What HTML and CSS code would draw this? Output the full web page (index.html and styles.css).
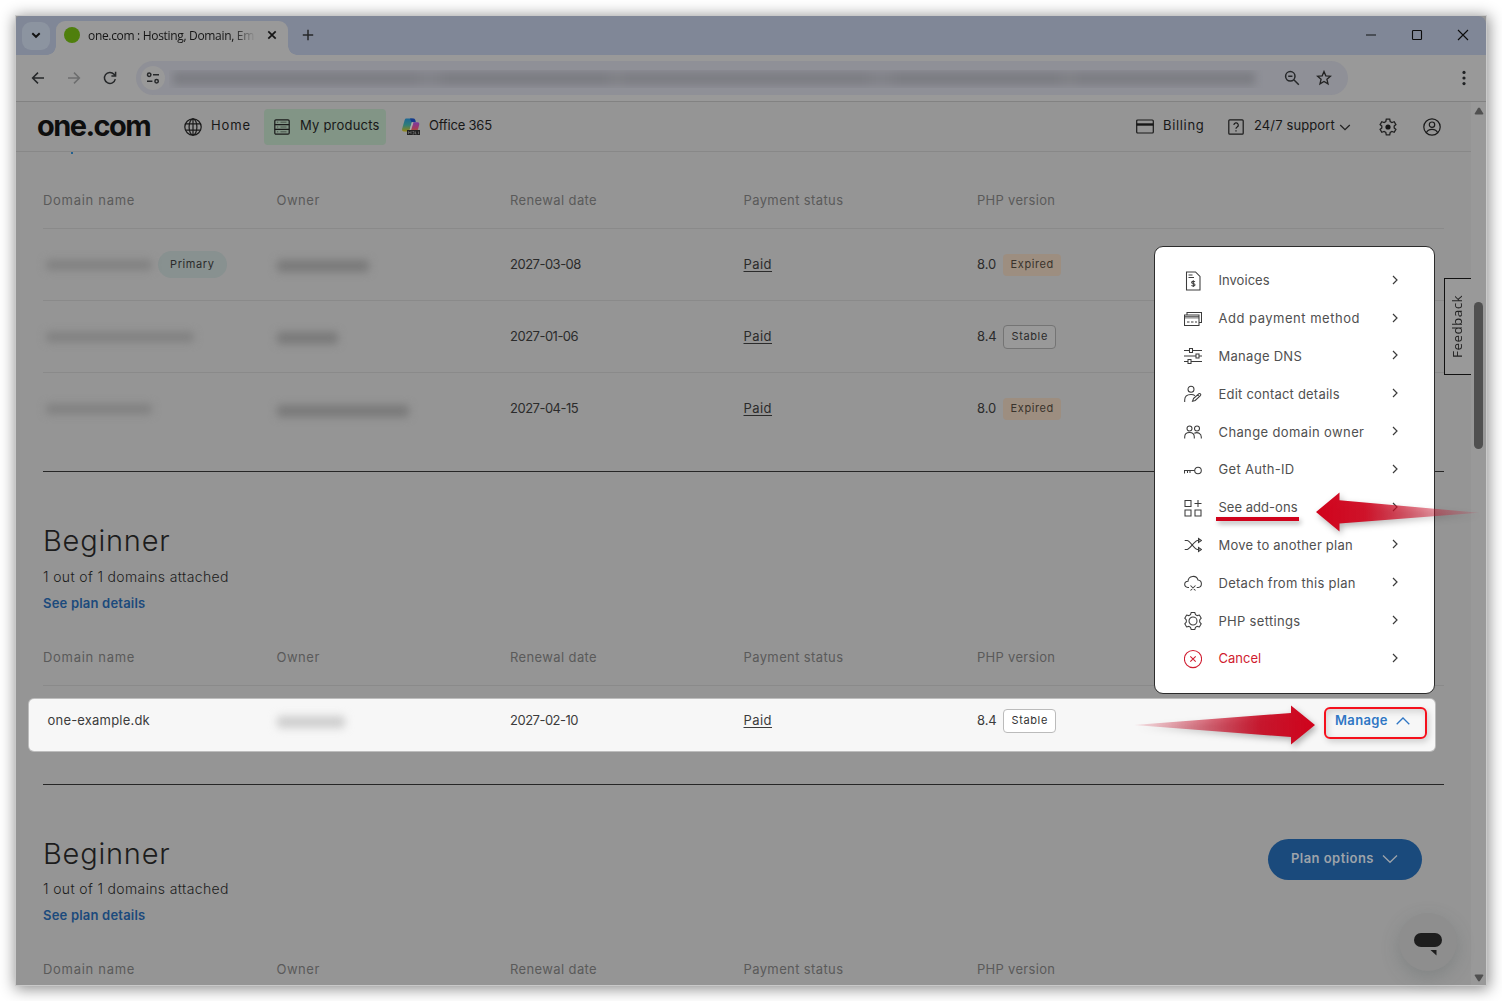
FILE: index.html
```html
<!DOCTYPE html>
<html lang="en">
<head>
<meta charset="utf-8">
<title>one.com</title>
<link rel="stylesheet" href="styles.css">
</head>
<body>
<div class="window">
  <div class="tabstrip">
    <div class="tab-search"><svg width="12" height="12" viewBox="0 0 12 12"><path class="s2" d="M2.3 4.2 6 7.8l3.7-3.6"/></svg></div>
    <div class="tab">
      <i class="favicon"></i>
      <span class="tab-title">one.com : Hosting, Domain, Em</span>
      <svg class="tab-x" width="10" height="10" viewBox="0 0 10 10"><path class="s17" d="M1.3 1.3l7.4 7.4M8.7 1.3 1.3 8.7"/></svg>
    </div>
    <svg class="tab-plus" width="12" height="12" viewBox="0 0 12 12"><path class="s15" d="M6 .8v10.4M.8 6h10.4"/></svg>
    <div class="win-controls">
      <svg width="12" height="12" viewBox="0 0 12 12"><path d="M1 6h10" stroke="#3c4046" stroke-width="1.6"/></svg>
      <svg width="12" height="12" viewBox="0 0 12 12"><rect class="s1k" x="1.5" y="1.5" width="9" height="9" rx=".8"/></svg>
      <svg width="12" height="12" viewBox="0 0 12 12"><path class="s1k" d="M1 1l10 10M11 1 1 11"/></svg>
    </div>
  </div>
  <div class="toolbar">
    <svg width="16" height="16" viewBox="0 0 16 16"><path class="s15" d="M14 8H2.8M8 2.6 2.6 8 8 13.4"/></svg>
    <svg class="fade" width="16" height="16" viewBox="0 0 16 16"><path class="s15" d="M2 8h11.2M8 2.6 13.4 8 8 13.4"/></svg>
    <svg width="16" height="16" viewBox="0 0 16 16"><path class="s15" d="M13.3 9.2A5.5 5.5 0 1 1 12 4.2l1.3 1.4M13.6 1.8v4.2H9.4"/></svg>
    <div class="omnibox">
      <span class="site"><svg width="14" height="12" viewBox="0 0 14 12"><g class="s15"><circle cx="3.2" cy="2.8" r="1.7"/><path d="M7 2.8h6M1 9.2h5.4"/><circle cx="10.6" cy="9.2" r="1.7"/></g></svg></span>
      <span class="url"><i class="url-blur"></i></span>
      <svg width="16" height="16" viewBox="0 0 16 16"><g class="s15"><circle cx="6.3" cy="6.3" r="4.7"/><path d="M9.8 9.8l5 5M4.2 6.3h4.2"/></g></svg>
      <svg class="star" width="16" height="16" viewBox="0 0 16 16"><path class="s13" d="M8 1.500l1.800 4.300 4.700.4-3.600 3 1.100 4.600L8 11.400l-4 2.400 1.100-4.600-3.600-3 4.700-.4z"/></svg>
    </div>
    <svg class="dots" width="4" height="16" viewBox="0 0 4 16"><circle cx="2" cy="2.4" r="1.6"/><circle cx="2" cy="8" r="1.6"/><circle cx="2" cy="13.6" r="1.6"/></svg>
  </div>

  <div class="viewport">
    <div class="page">
      <header class="nav">
        <span class="logo">one.com</span>
        <a class="nav-item home">
          <svg width="18" height="18" viewBox="0 0 18 18"><g class="s12"><circle cx="9" cy="9" r="8.2"/><ellipse cx="9" cy="9" rx="3.9" ry="8.2"/><path d="M1.8 5.8h14.4M1.8 12.2h14.4M9 .8v16.4"/></g></svg>
          <span class="k8">Home</span>
        </a>
        <a class="nav-item active">
          <svg width="16" height="16" viewBox="0 0 16 16"><g class="s12"><rect x=".8" y=".8" width="14.4" height="14.4" rx="1.2"/><path d="M.8 5.600h14.400M.8 10.400h14.400"/><path d="M3 3.200h1.200M3 8h1.200M3 12.800h1.200M6.500 3.200h6M6.500 8h6M6.500 12.800h6" stroke-width=".8" stroke="#3c463e"/></g></svg>
          <span class="k2">My products</span>
        </a>
        <a class="nav-item office">
          <svg width="18" height="18" viewBox="0 0 18 18">
            <defs>
              <linearGradient id="oa" x1="0" y1="0" x2="0" y2="1"><stop offset="0" stop-color="#1d6795"/><stop offset=".5" stop-color="#2f7d78"/><stop offset="1" stop-color="#968513"/></linearGradient>
              <linearGradient id="ob" x1="0" y1="0" x2="0" y2="1"><stop offset="0" stop-color="#7a3aa0"/><stop offset=".6" stop-color="#a03868"/><stop offset="1" stop-color="#a8502e"/></linearGradient>
            </defs>
            <path d="M4.500.5h6.200L7.800 11.600C7.200 13.400 6.300 13.500 5 13.500H2C.2 13.500-.2 12 .2 10.500L2.700 2C3.100.9 3.600.5 4.500.5z" fill="url(#oa)"/>
            <path d="M8 .5h3.200c1.300 0 1.800.6 2.100 1.600l.6 2.200H9.500z" fill="#15398c"/>
            <path d="M11.300 4.300h4.200c1.700 0 2 1.300 1.700 2.600L15.500 13H6.500c1.200 0 1.600-.6 2-1.800z" fill="url(#ob)"/>
            <path d="M9.900 4.300h1.600L9 12.500H7.400z" fill="#a9a9a9"/>
            <rect x="5" y="12" width="13" height="5" fill="#222"/>
            <path d="M6.500 16v-2.500l1.200 1.500L9 13.500V16M10.500 13.500h1.500v2.500h-1.500M13.500 13.500v2.500h1M16.500 13.500v2.500" stroke="#777" stroke-width=".7" fill="none"/>
          </svg>
          <span class="kn2">Office 365</span>
        </a>
        <span class="spacer"></span>
        <a class="nav-item billing">
          <svg width="18" height="15" viewBox="0 0 18 15"><rect class="s12" x=".7" y="1" width="16.600" height="13" rx="1"/><path d="M.7 5.500h16.600" stroke="#161616" stroke-width="2.400"/></svg>
          <span class="k6">Billing</span>
        </a>
        <a class="nav-item support">
          <svg width="16" height="16" viewBox="0 0 16 16"><g class="s12"><rect x=".8" y=".8" width="14.400" height="14.400" rx="1"/><path d="M5.900 6.100a2.200 2.200 0 1 1 3.300 1.900c-.8.5-1.200.9-1.200 1.800M8 11.300v1.200"/></g></svg>
          <span class="k1">24/7 support</span>
          <svg class="caret" width="12" height="12" viewBox="0 0 12 12"><path class="s13" d="M1.200 4 6 8.600 10.800 4"/></svg>
        </a>
        <svg class="gear" width="18" height="18" viewBox="0 0 18 18"><path class="s13" d="M7.300 1.200h3.400l.5 2.300 1.700 1 2.300-.8 1.700 2.900L15.200 8.100v1.800l1.700 1.500-1.700 2.900-2.300-.8-1.700 1-.5 2.300H7.300l-.5-2.300-1.700-1-2.300.8-1.700-2.900L2.800 9.900V8.100L1.100 6.600l1.700-2.900 2.300.8 1.700-1z"/><circle cx="9" cy="9" r="2.600" fill="#161616"/></svg>
        <svg class="user" width="18" height="18" viewBox="0 0 18 18"><g class="s12"><circle cx="9" cy="9" r="8.200"/><circle cx="9" cy="6.700" r="2.700"/><path d="M3.300 14.800c1-2.600 3-3.500 5.700-3.500s4.700.9 5.700 3.500"/></g></svg>
      </header>

      <main>
        <section class="plan first">
          <i class="link-tail"></i>
          <div class="row thead"><span class="k7">Domain name</span><span class="k5">Owner</span><span class="k4">Renewal date</span><span class="k4">Payment status</span><span class="k3">PHP version</span></div>
          <div class="row line">
            <span class="cell"><i class="blur d1"></i><b class="pill">Primary</b></span>
            <span class="cell"><i class="blur o1"></i></span>
            <span class="date">2027-03-08</span>
            <span class="paid"><u>Paid</u></span>
            <span class="cell php">8.0 <b class="tag expired">Expired</b></span>
          </div>
          <div class="row line">
            <span class="cell"><i class="blur d2"></i></span>
            <span class="cell"><i class="blur o2"></i></span>
            <span class="date">2027-01-06</span>
            <span class="paid"><u>Paid</u></span>
            <span class="cell php">8.4 <b class="tag">Stable</b></span>
          </div>
          <div class="row line">
            <span class="cell"><i class="blur d3"></i></span>
            <span class="cell"><i class="blur o3"></i></span>
            <span class="date">2027-04-15</span>
            <span class="paid"><u>Paid</u></span>
            <span class="cell php">8.0 <b class="tag expired">Expired</b></span>
          </div>
        </section>

        <section class="plan second">
          <h2>Beginner</h2>
          <p class="sub">1 out of 1 domains attached</p>
          <a class="details">See plan details</a>
          <div class="row thead"><span class="k7">Domain name</span><span class="k5">Owner</span><span class="k4">Renewal date</span><span class="k4">Payment status</span><span class="k3">PHP version</span></div>
          <div class="row spot">
            <span class="name">one-example.dk</span>
            <span class="cell"><i class="blur o4"></i></span>
            <span class="date">2027-02-10</span>
            <span><u>Paid</u></span>
            <span class="cell php">8.4 <b class="tag">Stable</b></span>
            <a class="manage">Manage <svg width="14" height="10" viewBox="0 0 14 10"><path d="M.7 8.300 7 2l6.300 6.300"/></svg></a>
          </div>
        </section>

        <section class="plan third">
          <div class="plan-head">
            <h2>Beginner</h2>
            <a class="options">Plan options <svg width="16" height="10" viewBox="0 0 16 10"><path d="M1 1.500 8 8.300l7-6.800"/></svg></a>
          </div>
          <p class="sub">1 out of 1 domains attached</p>
          <a class="details">See plan details</a>
          <div class="row thead"><span class="k7">Domain name</span><span class="k5">Owner</span><span class="k4">Renewal date</span><span class="k4">Payment status</span><span class="k3">PHP version</span></div>
        </section>
      </main>
    </div>
    <div class="scrollbar">
      <svg width="10" height="8" viewBox="0 0 10 8"><path d="M4 1.200q1-1.400 2 0l3.200 5q.5 1.300-.8 1.300H1.600q-1.300 0-.8-1.300z"/></svg>
      <i class="thumb"></i>
      <svg class="down" width="10" height="8" viewBox="0 0 10 8"><path d="M4 6.800q1 1.400 2 0l3.200-5q.5-1.300-.8-1.300H1.600q-1.300 0-.8 1.300z"/></svg>
    </div>
  </div>
</div>

<div class="feedback"><span>Feedback</span></div>
<div class="chat"><svg width="30" height="24" viewBox="0 0 30 24"><rect x="1" y="1" width="28" height="14" rx="7"/><path d="M17.500 18h6v5.500z"/></svg></div>

<nav class="menu">
  <a><svg viewBox="0 0 18 20"><path d="M2.500 1h9l4.500 4.500V19H2.500z"/><path d="M4.500 4h4M4.500 6.500h5.500M10.900 10.900c-.8-1-3.300-.8-3.300.5 0 1.500 3.400.8 3.400 2.400 0 1.300-2.700 1.500-3.500.4M9.300 9.300v6.600"/></svg><span class="k0">Invoices</span><svg class="go" viewBox="0 0 6 10"><path d="M1 1l4 4-4 4"/></svg></a>
  <a><svg viewBox="0 0 18 20"><path d="M1 8h14v2H1z" fill="#c4c4c4" stroke="none"/><path d="M3 6V3.500h14.500v10H15M.5 6H15v10.500H.5zM.5 7.800H15M3 13h2.500M7 13h2.500M11 13h2"/></svg><span class="k5">Add payment method</span><svg class="go" viewBox="0 0 6 10"><path d="M1 1l4 4-4 4"/></svg></a>
  <a><svg viewBox="0 0 18 20"><path d="M0 4.500h5.500M8.500 4.500H18M5.500 2.500h3v4h-3zM0 10h12M15.500 10H18M12 8h3v4h-3zM0 15.500h4M7 15.500h11M4 13.500h3v4H4z"/></svg><span class="k25">Manage DNS</span><svg class="go" viewBox="0 0 6 10"><path d="M1 1l4 4-4 4"/></svg></a>
  <a><svg viewBox="0 0 18 20"><circle cx="7" cy="5.200" r="3"/><path d="M.7 18v-2c0-3.500 2.500-5.500 6.300-5.500 1.800 0 3 .4 4 1.200M9.500 14.500l5.200-4.700c1.300-.9 2.800.7 1.700 1.800l-5.200 4.900-2.700.8zM13.700 11l1.700 1.700"/></svg><span class="k2">Edit contact details</span><svg class="go" viewBox="0 0 6 10"><path d="M1 1l4 4-4 4"/></svg></a>
  <a><svg viewBox="0 0 18 20"><circle cx="5.500" cy="6.500" r="2.500"/><circle cx="13" cy="6.500" r="2.500"/><path d="M.7 16.500v-1.500c0-3 1.800-4.500 4.800-4.500s4.800 1.500 4.800 4.500v1.500M10.300 11.200c3.500-1.500 7 .3 7 3.800v1.500"/></svg><span class="k4">Change domain owner</span><svg class="go" viewBox="0 0 6 10"><path d="M1 1l4 4-4 4"/></svg></a>
  <a><svg viewBox="0 0 18 20"><circle cx="14" cy="10.500" r="3.300"/><path d="M10.700 10.500H.5v3M3.500 10.500v2.500M6 10.500v2.500"/></svg><span class="k3">Get Auth-ID</span><svg class="go" viewBox="0 0 6 10"><path d="M1 1l4 4-4 4"/></svg></a>
  <a><svg viewBox="0 0 18 20"><path d="M1 2.500h6v6H1zM1 12h6v6H1zM11 12h6v6h-6zM14 2v7M10.500 5.500h7"/></svg><span class="k0">See add-ons</span><svg class="go" viewBox="0 0 6 10"><path d="M1 1l4 4-4 4"/></svg></a>
  <a><svg viewBox="0 0 18 20"><path d="M.7 5.500h2.500c2.500 0 7.500 9 10.300 9h2M.7 14.500h2.500c2.500 0 7.500-9 10.300-9h2M14.500 3.500l3 2-3 2zM14.500 12.500l3 2-3 2z"/></svg><span class="k2">Move to another plan</span><svg class="go" viewBox="0 0 6 10"><path d="M1 1l4 4-4 4"/></svg></a>
  <a><svg viewBox="0 0 18 20"><path d="M5 14.500H4c-4.500-.5-4.300-6 0-6.200.3-5.700 8.300-6.800 10-1.300 4.500.5 4.500 7 .2 7.500h-1.500M6.500 12.500l5 5M11.500 12.500l-5 5"/></svg><span class="k25">Detach from this plan</span><svg class="go" viewBox="0 0 6 10"><path d="M1 1l4 4-4 4"/></svg></a>
  <a><svg viewBox="0 0 18 20"><path d="M7.200 1.500h3.600l.7 2.100 1.700 1 2.200-.5 1.800 3.100-1.500 1.700v2.200l1.500 1.700-1.800 3.100-2.200-.5-1.700 1-.7 2.100H7.200l-.7-2.100-1.700-1-2.200.5-1.800-3.100 1.500-1.700V8.900L.8 7.200l1.800-3.100 2.200.5 1.700-1z"/><circle cx="9" cy="10" r="4"/></svg><span class="k3">PHP settings</span><svg class="go" viewBox="0 0 6 10"><path d="M1 1l4 4-4 4"/></svg></a>
  <a class="danger"><svg viewBox="0 0 18 20"><circle cx="9" cy="10" r="8.600"/><path d="M6.300 7.300l5.400 5.400M11.700 7.300l-5.400 5.400"/></svg><span>Cancel</span><svg class="go" viewBox="0 0 6 10"><path d="M1 1l4 4-4 4"/></svg></a>
</nav>

<i class="underline"></i>
<svg class="arrow arrow-left" width="164" height="40" viewBox="0 0 164 40">
  <defs><linearGradient id="al" x1="0" x2="1"><stop offset="0" stop-color="#d0021b"/><stop offset=".3" stop-color="#cf0a22" stop-opacity=".95"/><stop offset="1" stop-color="#c81430" stop-opacity=".1"/></linearGradient></defs>
  <path fill="url(#al)" d="M0 20 23.500.5V8.300L163 20.700 23.500 31.500V39.500z"/>
</svg>
<svg class="arrow arrow-right" width="183" height="40" viewBox="0 0 183 40">
  <defs><linearGradient id="ar" x1="0" x2="1"><stop offset="0" stop-color="#c81430" stop-opacity=".1"/><stop offset=".7" stop-color="#c60a22" stop-opacity=".93"/><stop offset="1" stop-color="#d0021b"/></linearGradient></defs>
  <path fill="url(#ar)" d="M182 20 158 .5V8L1 20l157 12v7.500z"/>
</svg>
</body>
</html>
```
FILE: styles.css
```css
* { box-sizing: border-box; }
body {
  margin: 0;
  width: 1502px;
  height: 1001px;
  padding: 16px;
  overflow: hidden;
  position: relative;
  background: #fff;
  color: #202020;
  font: 300 13px/18px Inter, "Open Sans", sans-serif;
}
svg { display: block; flex: none; fill: none; }
i, b { font-style: normal; font-weight: inherit; }

.s1k { stroke: #0c0c0c; stroke-width: 1.1; fill: none; }
.s12 { stroke: #1a1a1a; stroke-width: 1.2; fill: none; }
.s13 { stroke: #222; stroke-width: 1.3; fill: none; }
.s15 { stroke: #26282a; stroke-width: 1.5; fill: none; }
.s17 { stroke: #161616; stroke-width: 1.7; fill: none; }
.s2 { stroke: #121212; stroke-width: 1.9; fill: none; }

/* letter-spacing steps */
.kn2 { letter-spacing: -.2px; }
.k0 { letter-spacing: .03px; }
.k1 { letter-spacing: .12px; }
.k2 { letter-spacing: .21px; }
.k25 { letter-spacing: .28px; }
.k3 { letter-spacing: .3px; }
.k4 { letter-spacing: .38px; }
.k5 { letter-spacing: .51px; }
.k6 { letter-spacing: .66px; }
.k7 { letter-spacing: .7px; }
.k8 { letter-spacing: .88px; }

.window {
  width: 1470px;
  height: 969px;
  display: flex;
  flex-direction: column;
  background: #959595;
  box-shadow: 0 0 0 1px #c9c9c9, 1px 2px 14px 2px rgba(0, 0, 0, .45);
}

/* browser chrome */
.tabstrip {
  flex: none;
  height: 39px;
  display: flex;
  align-items: center;
  padding: 0 12px 0 6px;
  background: #808797;
  border-radius: 4px 8px 0 0;
}
.tab-search {
  width: 28px;
  height: 28px;
  display: grid;
  place-items: center;
  border-radius: 9px;
  background: #8c94a0;
}
.tab-search svg { margin-top: -1px; }
.tab {
  align-self: flex-end;
  width: 232px;
  height: 34px;
  margin-left: 6px;
  padding: 0 11px 6px 8px;
  display: flex;
  align-items: center;
  background: #999;
  border-radius: 9px 9px 0 0;
  position: relative;
}
.tab::before, .tab::after {
  content: "";
  position: absolute;
  bottom: 0;
  width: 9px;
  height: 9px;
}
.tab::before { left: -9px; background: radial-gradient(circle at 0 0, transparent 8.500px, #999 9px); }
.tab::after { right: -9px; background: radial-gradient(circle at 100% 0, transparent 8.500px, #999 9px); }
.favicon { width: 16px; height: 16px; border-radius: 50%; background: #4f7f0d; }
.tab-title {
  width: 168px;
  margin-left: 8px;
  white-space: nowrap;
  color: #161616;
  font: 400 12px/16px "Open Sans", sans-serif;
  letter-spacing: -.32px;
  padding-top: 1px;
  -webkit-mask-image: linear-gradient(90deg, #000 145px, transparent 168px);
  mask-image: linear-gradient(90deg, #000 145px, transparent 168px);
}
.tab-x { margin-left: auto; }
.tab-plus { margin: -1px 0 0 14px; }
.win-controls { display: flex; gap: 34px; margin: -1px 0 0 auto; padding-right: 5px; }

.toolbar {
  flex: none;
  height: 47px;
  display: flex;
  align-items: center;
  padding: 0 20px 1px 14px;
  gap: 20px;
  background: #999;
  border-bottom: 1px solid #828282;
}
.fade { opacity: .38; }
.omnibox {
  width: 1212px;
  height: 34px;
  margin-left: -2px;
  padding: 0 16px 0 5px;
  display: flex;
  align-items: center;
  border-radius: 17px;
  background: #8f9097;
}
.site {
  width: 24px;
  height: 24px;
  display: grid;
  place-items: center;
  border-radius: 50%;
  background: #999;
}
.url { width: 1098px; height: 18px; margin: 2px 21px 0 4px; overflow: hidden; }
.url-blur {
  display: block;
  height: 13px;
  margin: 2px 8px 0 4px;
  background: repeating-linear-gradient(90deg, #7b7c82 0 238px, #808187 250px 262px, #7a7b81 274px 431px, #7f8085 440px 452px);
  filter: blur(4px);
}
.star { margin-left: 16px; }
.dots { margin-left: auto; fill: #202224; }

/* page */
.viewport { flex: 1; min-height: 0; display: flex; }
.page { width: 1455px; overflow: hidden; }
.nav {
  height: 50px;
  display: flex;
  align-items: center;
  padding: 0 30px 0 21px;
  border-bottom: 1px solid #888;
  color: #181818;
  font-weight: 400;
}
.nav-item { display: flex; align-items: center; height: 36px; }
.nav-item span { padding-bottom: 3px; white-space: nowrap; }
.logo {
  width: 117px;
  color: #0e0e0e;
  font: 700 29px/36px Inter, sans-serif;
  letter-spacing: -1.550px;
  padding-bottom: 2px;
}
.home { width: 80px; margin-left: 30px; gap: 9px; }
.active { width: 122px; padding-left: 10px; gap: 10px; border-radius: 4px; background: #829586; }
.office { margin-left: 16px; gap: 9px; }
.spacer { flex: 1; }
.billing { width: 92px; gap: 9px; }
.support { width: 122px; gap: 10px; }
.caret { margin-left: -6px; }
.gear { margin-left: 29px; }
.user { margin-left: 26px; }

main { padding: 0 27px; }
.plan { border-bottom: 1px solid #262626; }
.row {
  display: grid;
  grid-template-columns: repeat(5, 233.500px) 1fr;
  align-items: center;
}
.row > span { white-space: nowrap; }
.thead { height: 54px; padding-bottom: 2px; color: #5a5a5a; font-weight: 400; }
.line { height: 72px; border-top: 1px solid #8a8a8a; }
.line .date, .line .paid { margin-top: -2px; }
.cell { display: flex; align-items: center; }
.date { letter-spacing: -.5px; font-weight: 400; color: #2b2b2b; }
.php { letter-spacing: -.1px; gap: 6.500px; margin-top: -1px; font-weight: 400; color: #2b2b2b; }
u {
  letter-spacing: .45px;
  font-weight: 400;
  color: #2b2b2b;
  text-decoration-thickness: 1px;
  text-underline-offset: 2px;
}
.pill, .tag { font-size: 11px; line-height: 14px; letter-spacing: .6px; font-weight: 400; color: #2b2b2b; }
.pill {
  height: 27px;
  padding: 6px 0 0 12px;
  width: 69px;
  margin-left: 6px;
  border-radius: 14px;
  background: #889190;
}
.tag {
  height: 24px;
  padding: 3px 7.500px 0;
  border: 1px solid #747474;
  border-radius: 4px;
  background: #999;
  margin-top: 2px;
}
.expired { height: 22px; border: 0; padding: 3px 7px 0 8px; background: #9d8e80; color: #39332c; margin-top: 1px; }

.blur {
  height: 10px;
  border-radius: 4px;
  background: #808080;
  filter: blur(4px);
  margin-top: 1px;
}
.d1 { width: 106px; margin-left: 3px; }
.d2 { width: 148px; margin-left: 3px; }
.d3 { width: 106px; margin-left: 3px; }
.o1, .o2, .o3 { height: 12px; background: #797979; margin-top: 2px; }
.o1 { width: 92px; }
.o2 { width: 61px; }
.o3 { width: 132px; margin-top: 4px; }
.o4 { width: 68px; height: 12px; background: #cdcdcd; margin-top: 3px; }

.first { height: 320px; padding-top: 22px; position: relative; }
.link-tail { position: absolute; left: 28px; top: 0; width: 2px; height: 2px; background: #24618f; }

h2 {
  margin: 0;
  font: 300 29px/36px Inter, sans-serif;
  letter-spacing: .780px;
  color: #1c1c1c;
}
.sub { margin: 0; font-size: 14px; line-height: 20px; letter-spacing: .36px; color: #1c1c1c; }
.details {
  display: block;
  color: #1b4a7c;
  font-weight: 600;
  letter-spacing: .2px;
  line-height: 18px;
}
.second { height: 313px; padding-top: 51px; }
.second .sub { margin-top: 8px; }
.second .details { margin-top: 7px; }
.second .thead { margin-top: 19px; border-bottom: 1px solid #8a8a8a; height: 55px; }
.spot {
  height: 52px;
  width: 1406px;
  margin: 13px 0 0 -14px;
  padding: 0 8px 0 14px;
  align-items: start;
  border-radius: 5px;
  background: #f7f7f7;
  box-shadow: 0 0 0 1px #bdbdbd;
  color: #3c3c3c;
}
.spot > span { height: 18px; margin-top: 12px; }
.spot .name { padding-left: 4.500px; letter-spacing: .2px; font-weight: 400; }
.spot .date, .spot .php, .spot u { color: #3c3c3c; }
.spot .tag { background: #fff; border-color: #bbb; color: #333; }
.manage {
  justify-self: end;
  width: 103px;
  height: 32px;
  margin-top: 8px;
  padding: 0 0 6px 9px;
  display: flex;
  align-items: center;
  gap: 8px;
  border: 2px solid #f5101c;
  border-radius: 6px;
  box-shadow: 2px 3px 6px rgba(0, 0, 0, .16), inset 2px 3px 7px rgba(0, 0, 0, .14);
  color: #2f76c4;
  font-weight: 600;
  letter-spacing: .36px;
}
.manage svg { stroke: #2f76c4; stroke-width: 1.300; margin-top: 2px; }
.third { padding-top: 51px; border: 0; }
.plan-head { display: flex; justify-content: space-between; height: 36px; padding-right: 22px; }
.third .sub { margin-top: 7px; }
.third .details { margin-top: 7px; }
.third .thead { margin-top: 19px; }
.options {
  width: 154px;
  height: 41px;
  margin-top: 3px;
  padding: 0 0 3px 23px;
  display: flex;
  align-items: center;
  gap: 8px;
  border-radius: 21px;
  background: #1a4a7c;
  color: #9da3aa;
  font-weight: 600;
  letter-spacing: .45px;
}
.options svg { stroke: #9da3aa; stroke-width: 1.300; margin-top: 1px; }

.scrollbar {
  width: 15px;
  display: flex;
  flex-direction: column;
  align-items: center;
  padding: 5px 0 3px;
  background: #999;
}
.scrollbar svg { fill: #505050; }
.thumb { width: 9px; height: 147px; margin-top: 187px; border-radius: 5px; background: #505050; }
.down { margin-top: auto; }

/* floating widgets */
.feedback {
  position: absolute;
  left: 1444px;
  top: 278px;
  width: 27px;
  height: 97px;
  display: grid;
  place-items: center;
  padding-right: 2px;
  border: 1px solid #111;
  border-right: 0;
  background: #999;
}
.feedback span {
  writing-mode: vertical-rl;
  transform: rotate(180deg);
  font: 400 13.500px/16px "Open Sans", sans-serif;
  letter-spacing: .4px;
  color: #222;
}
.chat {
  position: absolute;
  left: 1399px;
  top: 913px;
  width: 58px;
  height: 58px;
  display: grid;
  place-items: center;
  padding-top: 3px;
  border-radius: 50%;
  background: #8e8e8e;
  box-shadow: 0 6px 18px rgba(70, 85, 85, .25);
}
.chat svg { fill: #1e1e1e; }

.menu {
  position: absolute;
  left: 1154px;
  top: 246px;
  width: 281px;
  height: 448px;
  padding: 14.500px 36.500px 0 28.500px;
  border: 1.500px solid #2c2c2c;
  border-radius: 9px;
  background: #fff;
}
.menu a { height: 37.800px; display: flex; align-items: center; }
.menu svg { width: 18px; height: 20px; stroke: #3c3c3c; stroke-width: 1.050; margin-top: 1px; }
.menu span { margin-left: 17px; font-weight: 400; white-space: nowrap; color: #505050; }
.menu .go { width: 6px; height: 10px; margin-left: auto; stroke-width: 1.200; margin-top: -1px; }
.menu .danger span { color: #d01c30; }
.menu .danger svg:first-child { stroke: #d01c30; }

/* annotations */
.underline {
  position: absolute;
  left: 1216px;
  top: 517px;
  width: 83px;
  height: 4px;
  background: #d0021b;
  box-shadow: 2px 3px 5px rgba(0, 0, 0, .3);
}
.arrow { position: absolute; filter: drop-shadow(2px 3px 3px rgba(0, 0, 0, .3)); }
.arrow-left { left: 1316px; top: 492px; }
.arrow-right { left: 1133px; top: 705px; }
```
